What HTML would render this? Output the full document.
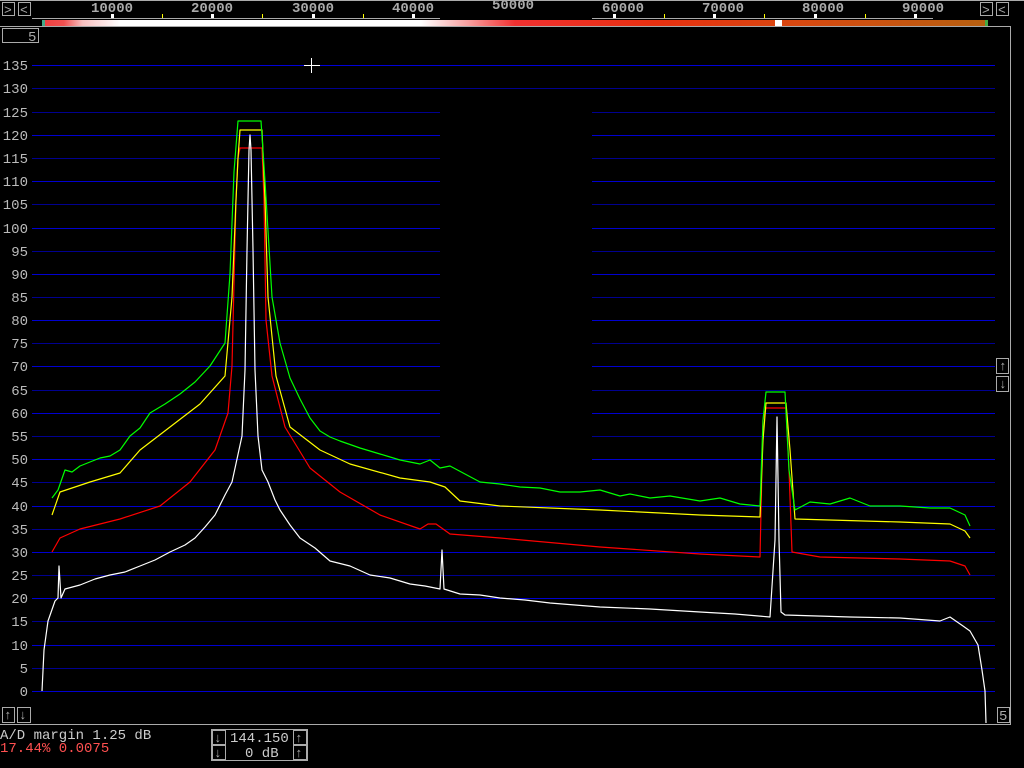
<!DOCTYPE html>
<html><head><meta charset="utf-8"><style>
html,body{margin:0;padding:0;background:#000;width:1024px;height:768px;overflow:hidden}
svg{display:block}
text{font-family:"Liberation Mono",monospace;}
</style></head><body>
<svg width="1024" height="768" xmlns="http://www.w3.org/2000/svg">
<rect width="1024" height="768" fill="#000"/>
<g shape-rendering="crispEdges">
<line x1="0" y1="0.5" x2="1024" y2="0.5" stroke="#aaa"/>
<line x1="0" y1="26.5" x2="1011" y2="26.5" stroke="#aaa"/>
<line x1="1010.5" y1="26" x2="1010.5" y2="724" stroke="#aaa"/>
<line x1="0" y1="724.5" x2="1011" y2="724.5" stroke="#aaa"/>
<line x1="32" y1="18.5" x2="440" y2="18.5" stroke="#aaa"/>
<line x1="592" y1="18.5" x2="933" y2="18.5" stroke="#aaa"/>
<g fill="none" stroke="#aaa">
<rect x="2.5" y="2.5" width="12" height="13"/><rect x="18.5" y="2.5" width="12" height="13"/>
<rect x="980.5" y="2.5" width="12" height="13"/><rect x="996.5" y="2.5" width="12" height="13"/>
<rect x="2.5" y="28.5" width="36" height="14"/>
<rect x="996.5" y="358.5" width="12" height="15"/><rect x="996.5" y="376.5" width="12" height="15"/>
<rect x="997.5" y="707.5" width="12" height="15"/>
<rect x="2.5" y="707.5" width="12" height="15"/><rect x="17.5" y="707.5" width="13" height="15"/>
<rect x="211.5" y="729.5" width="96" height="31"/>
<rect x="212.5" y="730.5" width="13" height="14"/><rect x="293.5" y="730.5" width="13" height="14"/>
<rect x="212.5" y="745.5" width="13" height="14"/><rect x="293.5" y="745.5" width="13" height="14"/>
</g>
</g>
<g fill="#aaa" font-size="13">
<text x="4" y="14">&gt;</text><text x="20" y="14">&lt;</text>
<text x="982" y="14">&gt;</text><text x="998" y="14">&lt;</text>
<text x="28" y="41" font-size="14">5</text>
<text x="999" y="370">↑</text><text x="999" y="388">↓</text>
<text x="999" y="720" font-size="14">5</text>
<text x="4" y="719">↑</text><text x="19" y="719">↓</text>
<text x="214" y="742">↓</text><text x="295" y="742">↑</text>
<text x="214" y="757">↓</text><text x="295" y="757">↑</text>
</g>
<g fill="#aaa" font-size="14" font-weight="bold" text-anchor="middle">
<text x="112" y="12">10000</text><text x="212" y="12">20000</text><text x="313" y="12">30000</text>
<text x="413" y="12">40000</text><text x="513" y="9">50000</text><text x="623" y="12">60000</text>
<text x="723" y="12">70000</text><text x="823" y="12">80000</text><text x="923" y="12">90000</text>
</g>
<g fill="#fff">
<rect x="111" y="14" width="3" height="4"/><rect x="211" y="14" width="3" height="4"/><rect x="312" y="14" width="3" height="4"/><rect x="412" y="14" width="3" height="4"/>
<rect x="613" y="14" width="3" height="4"/><rect x="713" y="14" width="3" height="4"/><rect x="814" y="14" width="3" height="4"/><rect x="914" y="14" width="3" height="4"/>
</g>
<g fill="#ff0">
<rect x="162" y="14" width="1" height="4"/><rect x="262" y="14" width="1" height="4"/><rect x="363" y="14" width="1" height="4"/>
<rect x="664" y="14" width="1" height="4"/><rect x="764" y="14" width="1" height="4"/><rect x="865" y="14" width="1" height="4"/>
</g>
<defs><linearGradient id="cb" x1="0" x2="1">
<stop offset="0" stop-color="#f04040"/><stop offset="0.02" stop-color="#f05050"/><stop offset="0.04" stop-color="#f8c0c0"/>
<stop offset="0.08" stop-color="#fff"/><stop offset="0.4" stop-color="#fff"/><stop offset="0.45" stop-color="#f8a0a0"/>
<stop offset="0.5" stop-color="#f03030"/><stop offset="0.65" stop-color="#e83010"/><stop offset="0.8" stop-color="#d84810"/>
<stop offset="1" stop-color="#b86010"/></linearGradient></defs>
<rect x="45" y="20" width="940" height="6" fill="url(#cb)"/>
<rect x="42" y="20" width="3" height="6" fill="#4a8"/><rect x="985" y="20" width="3" height="6" fill="#4a4"/>
<rect x="775" y="20" width="7" height="6" fill="#fff"/>
<g stroke-width="1" shape-rendering="crispEdges">
<line x1="32" y1="65.5" x2="995" y2="65.5" stroke="#0000d8"/>
<line x1="32" y1="88.5" x2="995" y2="88.5" stroke="#000090"/>
<path d="M32 112.5H440M592 112.5H995M32 158.5H440M592 158.5H995M32 204.5H440M592 204.5H995M32 251.5H440M592 251.5H995M32 297.5H440M592 297.5H995M32 343.5H440M592 343.5H995M32 390.5H440M592 390.5H995M32 436.5H440M592 436.5H995" stroke="#000090"/>
<path d="M32 135.5H440M592 135.5H995M32 181.5H440M592 181.5H995M32 228.5H440M592 228.5H995M32 274.5H440M592 274.5H995M32 320.5H440M592 320.5H995M32 366.5H440M592 366.5H995M32 413.5H440M592 413.5H995M32 459.5H440M592 459.5H995" stroke="#0000d0"/>
<path d="M32 482.5H995M32 529.5H995M32 575.5H995M32 621.5H995M32 668.5H995" stroke="#000090"/>
<path d="M32 506.5H995M32 552.5H995M32 598.5H995M32 645.5H995M32 691.5H995" stroke="#0000d0"/>
</g>
<g fill="#bbb" font-size="14" text-anchor="end">
<text x="28" y="70">135</text><text x="28" y="93">130</text><text x="28" y="117">125</text><text x="28" y="140">120</text>
<text x="28" y="163">115</text><text x="28" y="186">110</text><text x="28" y="209">105</text><text x="28" y="233">100</text>
<text x="28" y="256">95</text><text x="28" y="279">90</text><text x="28" y="302">85</text><text x="28" y="325">80</text>
<text x="28" y="348">75</text><text x="28" y="371">70</text><text x="28" y="395">65</text><text x="28" y="418">60</text>
<text x="28" y="441">55</text><text x="28" y="464">50</text><text x="28" y="487">45</text><text x="28" y="511">40</text>
<text x="28" y="534">35</text><text x="28" y="557">30</text><text x="28" y="580">25</text><text x="28" y="603">20</text>
<text x="28" y="626">15</text><text x="28" y="650">10</text><text x="28" y="673">5</text><text x="28" y="696">0</text>
</g>
<path d="M304 65.5H320M311.5 58V73" stroke="#fff" shape-rendering="crispEdges"/>
<g fill="none" stroke-width="1.2" stroke-linejoin="round">
<polyline stroke="#f00" points="52,552 60,538 80,529 120,519 160,506 190,482 215,450 228,413 232,366 236,200 238,158 240,148 262,148 264,200 266,320 272,376 285,427 310,468 340,492 380,515 420,529 428,524 436,524 450,534 500,538 600,547 700,554 760,557 763,420 766,408 786,408 789,470 792,552 820,557 900,559 950,561 965,566 970,575"/>
<polyline stroke="#ff0" points="52,515 60,492 90,482 120,473 140,450 170,427 200,404 225,376 232,297 236,200 238,158 240,130 262,130 265,200 268,297 276,376 290,427 320,450 350,464 400,478 430,482 445,487 460,501 500,506 600,510 700,515 760,517 763,440 766,403 786,403 790,450 795,519 900,522 950,524 965,531 970,538"/>
<polyline stroke="#0f0" points="52,498 58,490 65,470 72,472 80,466 90,462 100,458 110,456 120,450 130,436 140,428 150,413 165,404 180,394 195,382 210,366 225,343 230,274 234,172 238,121 261,121 265,181 272,297 280,343 290,378 300,399 310,418 320,431 330,437 340,441 360,448 380,454 400,460 420,464 430,460 440,468 450,466 465,474 480,482 500,484 520,487 540,488 560,492 580,492 600,490 620,496 630,494 650,498 670,496 700,501 720,498 740,504 760,506 763,420 766,392 785,392 789,470 795,510 810,502 830,504 850,498 870,506 900,506 930,508 950,508 965,515 970,526"/>
<polyline stroke="#fff" points="42,691 44,650 48,621 55,601 58,598 59,566 61,598 65,589 80,585 95,579 110,575 125,572 140,566 155,560 170,552 185,545 195,538 205,527 215,515 225,495 232,482 242,436 245,370 247,250 249,150 250,135 251,150 253,250 255,370 258,436 262,470 268,482 275,500 280,510 290,525 300,538 315,548 330,561 350,566 370,575 390,578 410,584 425,586 440,589 442,550 444,589 460,594 480,595 500,598 525,600 550,603 575,605 600,607 650,609 700,612 735,614 770,617 775,540 777,417 779,540 781,612 785,615 850,617 900,618 940,621 950,617 963,626 970,631 978,645 982,670 985,691 986,723"/>
</g>
<text x="0" y="739" fill="#ccc" font-size="14">A/D margin  1.25 dB</text>
<text x="0" y="752" fill="#ff5050" font-size="14">17.44% 0.0075</text>
<text x="230" y="742" fill="#ccc" font-size="14">144.150</text>
<text x="245" y="757" fill="#ccc" font-size="14">0 dB</text>
</svg>
</body></html>
